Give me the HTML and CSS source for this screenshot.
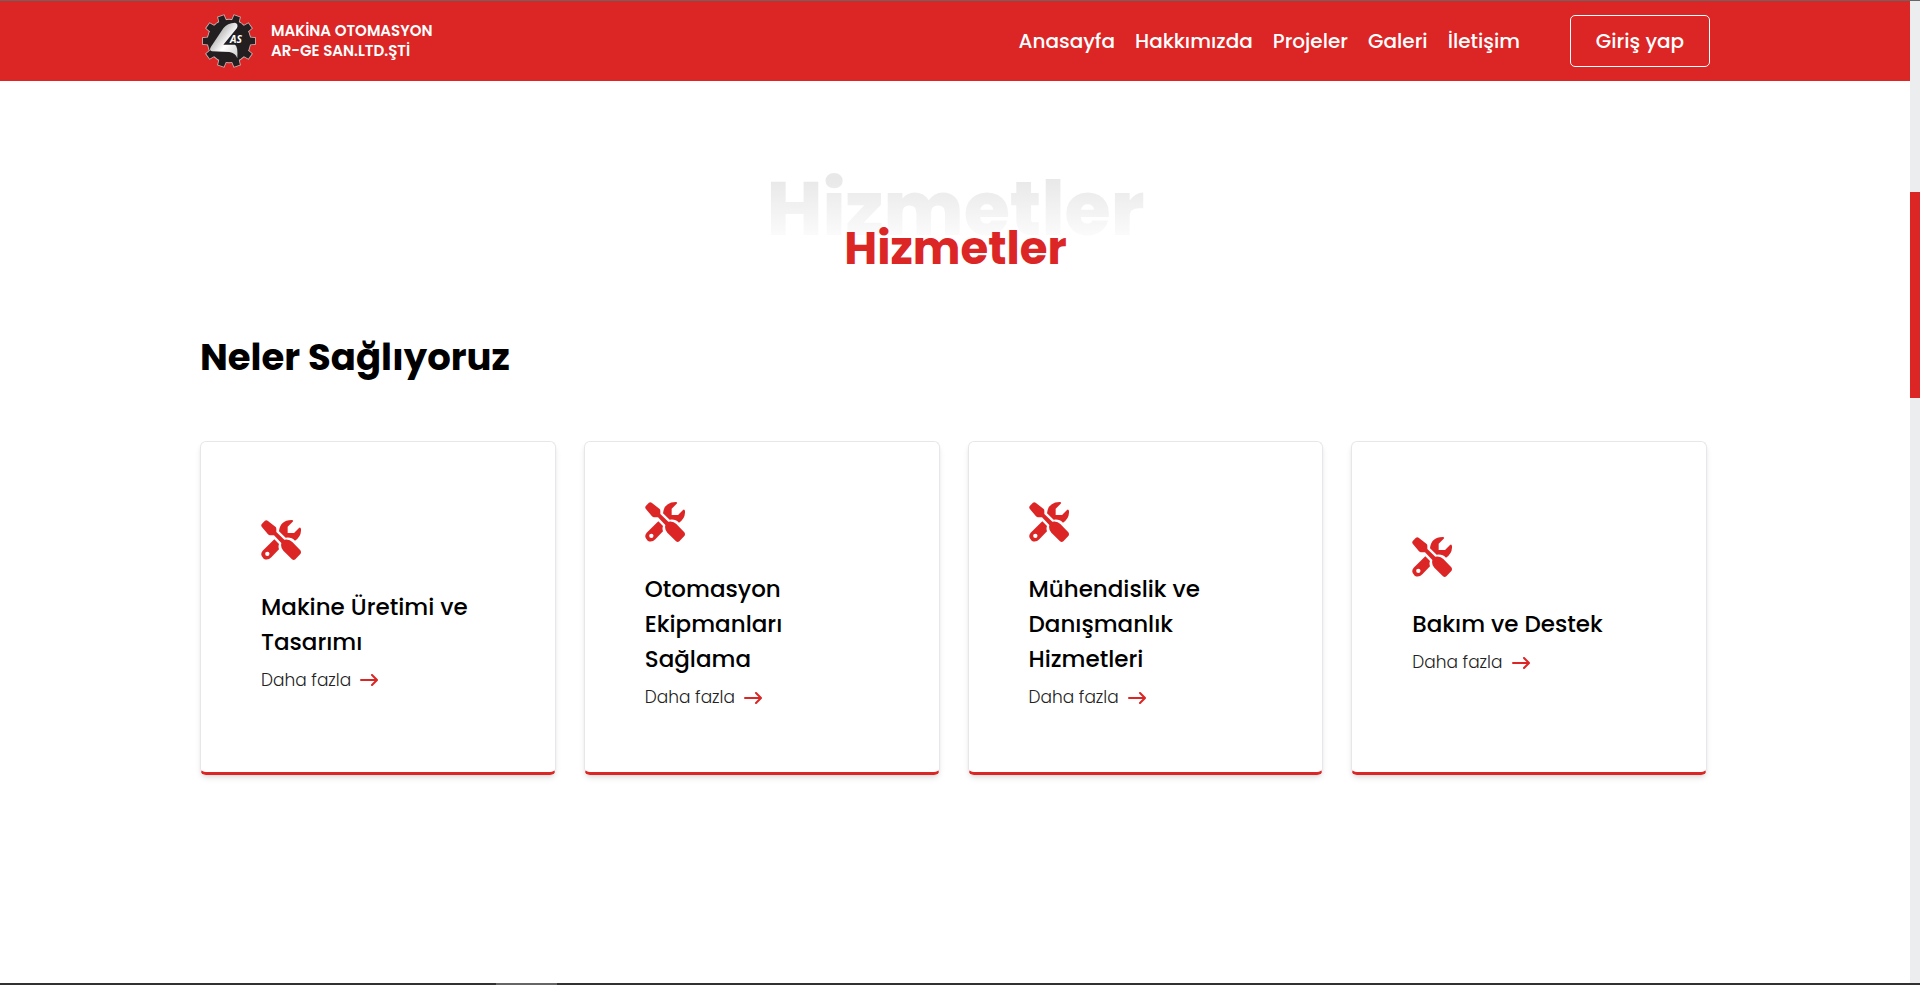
FILE: index.html
```html
<!DOCTYPE html>
<html lang="tr">
<head>
<meta charset="utf-8">
<meta name="viewport" content="width=device-width, initial-scale=1">
<title>Hizmetler</title>
<link rel="stylesheet" href="styles.css">
</head>
<body>
<svg class="sprite" aria-hidden="true">
  <symbol id="tools" viewBox="0 0 120 120">
    <path d="M11 3Q15-1 20 2L44 21Q46 23 46 27V36L70 59Q85 56 94 66L118 91Q122 97 118 102L103 118Q98 122 93 118L67 92Q58 84 61 69L39 46H27Q24 46 21 43L2 20Q-1 15 3 11Z"/>
    <path d="M92 0Q99 0 95 5L80 20V39H99L114 24Q119 20 120 28Q121 50 102 62Q91 50 74 53L54 34Q57 1 92 0Z"/>
    <path fill-rule="evenodd" d="M40 58L54 72Q51 80 54 88L31 112Q20 123 8 116Q-5 105 5 92ZM19 95A6 6 0 1 0 19 108A6 6 0 1 0 19 95Z"/>
  </symbol>
  <symbol id="arrow" viewBox="0 0 18 12">
    <path d="M1 6H16M12 1L17 6L12 11" fill="none" stroke="currentColor" stroke-width="2" stroke-linecap="round" stroke-linejoin="round"/>
  </symbol>
</svg>
<div class="edge-top"></div>
<div class="viewport">
  <div class="page">
    <header class="header">
      <a class="brand" href="#">
        <svg class="brand-logo" viewBox="6 12 162 162" role="img" aria-label="4AS">
          <defs>
            <linearGradient id="ribbon" x1="0" y1="0" x2="1" y2="1">
              <stop offset="0" stop-color="#777"/><stop offset=".3" stop-color="#bbb"/><stop offset=".6" stop-color="#fff"/><stop offset="1" stop-color="#ccc"/>
            </linearGradient>
            <path id="tooth" d="M76 36L78 15H96L98 36Z"/>
            <g id="teeth">
              <use href="#tooth" transform="rotate(18 87 93)"/><use href="#tooth" transform="rotate(54 87 93)"/>
              <use href="#tooth" transform="rotate(90 87 93)"/><use href="#tooth" transform="rotate(126 87 93)"/>
              <use href="#tooth" transform="rotate(162 87 93)"/><use href="#tooth" transform="rotate(198 87 93)"/>
              <use href="#tooth" transform="rotate(234 87 93)"/><use href="#tooth" transform="rotate(270 87 93)"/>
              <use href="#tooth" transform="rotate(306 87 93)"/><use href="#tooth" transform="rotate(342 87 93)"/>
              <circle cx="87" cy="93" r="64"/>
            </g>
          </defs>
          <use href="#teeth" fill="#c9b4b4" stroke="#c9b4b4" stroke-width="5"/>
          <use href="#teeth" fill="#231f20"/>
          <path fill="url(#ribbon)" d="M70 55Q82 39 105 38Q116 41 111 54L70 104H104Q114 106 112 145Q106 128 88 126L36 124Q26 121 33 110Z"/>
          <text class="logo-text" x="90" y="99">AS</text>
        </svg>
        <span class="brand-name">MAKİNA OTOMASYON<br>AR-GE SAN.LTD.ŞTİ</span>
      </a>
      <nav class="nav">
        <a href="#">Anasayfa</a>
        <a href="#">Hakkımızda</a>
        <a href="#">Projeler</a>
        <a href="#">Galeri</a>
        <a href="#">İletişim</a>
        <button class="login" type="button">Giriş yap</button>
      </nav>
    </header>
    <main class="main">
      <div class="title">
        <span class="title-ghost" aria-hidden="true">Hizmetler</span>
        <h1 class="title-text">Hizmetler</h1>
      </div>
      <h2 class="subtitle">Neler Sağlıyoruz</h2>
      <div class="cards">
        <article class="card">
          <svg class="card-icon"><use href="#tools"/></svg>
          <h3 class="card-title">Makine Üretimi ve Tasarımı</h3>
          <a class="more" href="#">Daha fazla <svg class="more-arrow"><use href="#arrow"/></svg></a>
        </article>
        <article class="card">
          <svg class="card-icon"><use href="#tools"/></svg>
          <h3 class="card-title">Otomasyon Ekipmanları Sağlama</h3>
          <a class="more" href="#">Daha fazla <svg class="more-arrow"><use href="#arrow"/></svg></a>
        </article>
        <article class="card">
          <svg class="card-icon"><use href="#tools"/></svg>
          <h3 class="card-title">Mühendislik ve Danışmanlık Hizmetleri</h3>
          <a class="more" href="#">Daha fazla <svg class="more-arrow"><use href="#arrow"/></svg></a>
        </article>
        <article class="card">
          <svg class="card-icon"><use href="#tools"/></svg>
          <h3 class="card-title">Bakım ve Destek</h3>
          <a class="more" href="#">Daha fazla <svg class="more-arrow"><use href="#arrow"/></svg></a>
        </article>
      </div>
    </main>
  </div>
  <div class="scroll-track"><div class="scroll-thumb"></div></div>
</div>
<div class="edge-bottom"><div class="edge-mark"></div></div>
</body>
</html>
```
FILE: styles.css
```css
* { box-sizing: border-box; }
body {
  margin: 0;
  min-height: 100vh;
  display: flex;
  flex-direction: column;
  background: #fff;
  color: #000;
  font-family: Poppins, Inter, "Open Sans", sans-serif;
}
h1, h2, h3 { margin: 0; }
a { color: inherit; text-decoration: none; }
.sprite { display: none; }
.edge-top { height: 1px; background: #666; }
.edge-bottom { height: 2px; background: #333032; display: flex; }
.edge-mark { width: 61px; margin-left: 496px; background: #666; }
.viewport { flex: 1; display: flex; }
.page { flex: 1; min-width: 0; }
.scroll-track {
  width: 10px;
  background: #ebedef;
  display: grid;
  grid-template-rows: 191fr 206fr 585fr;
}
.scroll-thumb { grid-row: 2; background: #dc2626; }

.header {
  height: 80px;
  padding: 0 200px;
  display: flex;
  align-items: center;
  justify-content: space-between;
  background: #dc2626;
  color: #fff;
}
.brand { display: flex; align-items: center; gap: 15px; padding-left: 2px; }
.brand-logo { width: 54px; height: 54px; }
.logo-text { font: italic 700 31px "Open Sans", sans-serif; fill: #fff; }
.brand-name { font-size: 15px; font-weight: 600; line-height: 20px; white-space: nowrap; }
.nav { display: flex; align-items: center; gap: 20px; font-size: 20px; font-weight: 500; }
.login {
  width: 140px;
  height: 52px;
  margin-left: 30px;
  padding: 0;
  border: 1px solid #fff;
  border-radius: 5px;
  background: transparent;
  color: #fff;
  font: inherit;
}

.main { padding: 84px 203px 0 200px; }
.title { display: grid; justify-items: center; padding-left: 4px; font-weight: 700; }
.title-ghost {
  font-size: 75px;
  font-weight: 800;
  line-height: 88px;
  background: linear-gradient(#e8e8e8 15%, #fff 95%);
  background-clip: text;
  -webkit-background-clip: text;
  color: transparent;
}
.title-text { margin-top: -34px; font-size: 45px; line-height: 60px; color: #dc2626; }
.subtitle { margin-top: 48px; font-size: 37px; line-height: 60px; }
.cards {
  display: grid;
  grid-template-columns: repeat(4, 1fr);
  gap: 28px;
  margin-top: 54px;
}
.card {
  display: flex;
  flex-direction: column;
  justify-content: center;
  align-items: flex-start;
  padding: 60px 60px 62px;
  border: 1px solid #e5e7eb;
  border-bottom: 3px solid #dc2626;
  border-radius: 6px;
  box-shadow: 0 4px 6px -1px rgba(0, 0, 0, .1), 0 2px 4px -2px rgba(0, 0, 0, .1);
}
.card-icon { width: 40px; height: 40px; fill: #dc2626; }
.card-title { margin: 30px 0 8px; font-size: 23px; font-weight: 500; line-height: 35px; }
.more { display: flex; align-items: center; gap: 9px; color: #222; font-size: 17px; font-weight: 300; line-height: 25px; }
.more-arrow { width: 18px; height: 12px; color: #dc2626; }
```
